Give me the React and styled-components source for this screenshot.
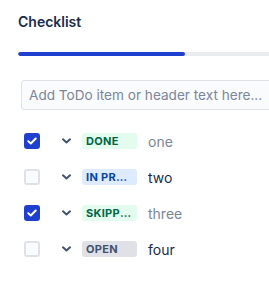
import React from 'react';
import styled, { createGlobalStyle } from 'styled-components';

const GlobalStyle = createGlobalStyle`
  body {
    margin: 0;
    background: #fff;
    font-family: Inter, "Noto Sans", sans-serif;
    color: #172b4d;
    overflow: hidden;
  }
`;

const Panel = styled.div`
  width: 269px;
  height: 298px;
  overflow: hidden;
  padding: 13px 0 0 18px;
  box-sizing: border-box;
`;

const Title = styled.h2`
  margin: 0;
  font-size: 14px;
  font-weight: 600;
  line-height: 17px;
  color: #172b4d;
`;

const Progress = styled.div`
  margin-top: 22px;
  width: 280px;
  height: 4px;
  border-radius: 2px;
  background: #ebecf0;
  overflow: hidden;
`;

const ProgressFill = styled.div`
  height: 100%;
  border-radius: 2px;
  background: #1f3fce;
`;

const AddInput = styled.input`
  display: block;
  margin: 24px 0 0 3px;
  width: 280px;
  height: 30px;
  box-sizing: border-box;
  padding: 0 7px;
  border: 1px solid #dfe1e6;
  border-radius: 3px;
  background: #fafbfc;
  font-family: inherit;
  font-size: 13.6px;
  color: #172b4d;

  &::placeholder {
    color: #7a869a;
  }
`;

const List = styled.ul`
  list-style: none;
  margin: 23px 0 0 0;
  padding: 0 0 0 6px;
  display: flex;
  flex-direction: column;
  gap: 20px;
`;

const Row = styled.li`
  display: flex;
  align-items: center;
  height: 16px;
`;

const Box = styled.span`
  flex: none;
  width: 16px;
  height: 16px;
  box-sizing: border-box;
  border-radius: 3px;
  display: flex;
  align-items: center;
  justify-content: center;
  background: ${p => (p.$checked ? '#1f3fce' : '#fafbfc')};
  border: 2px solid ${p => (p.$checked ? '#1f3fce' : '#dfe1e6')};
`;

const Chevron = styled.span`
  flex: none;
  margin-left: 21px;
  width: 10px;
  display: flex;
  justify-content: center;
`;

const Lozenge = styled.span`
  flex: none;
  margin-left: 11px;
  width: 55px;
  height: 16px;
  box-sizing: border-box;
  padding: 0 5px 0 4px;
  border-radius: 3px;
  font-size: 11px;
  font-weight: 700;
  line-height: 16px;
  letter-spacing: 0.3px;
  text-transform: uppercase;
  white-space: nowrap;
  overflow: hidden;
  text-overflow: ellipsis;
  background: ${p => p.$bg};
  color: ${p => p.$fg};
`;

const Label = styled.span`
  margin-left: 11px;
  font-size: 14px;
  color: ${p => (p.$muted ? '#7a869a' : '#172b4d')};
`;

const statuses = {
  done: { text: 'Done', bg: '#e3fcef', fg: '#006644' },
  progress: { text: 'In progress', bg: '#deebff', fg: '#0747a6' },
  skipped: { text: 'Skipped', bg: '#e3fcef', fg: '#006644' },
  open: { text: 'Open', bg: '#dfe1e6', fg: '#42526e' },
};

const items = [
  { label: 'one', status: 'done', checked: true },
  { label: 'two', status: 'progress', checked: false },
  { label: 'three', status: 'skipped', checked: true },
  { label: 'four', status: 'open', checked: false },
];

const Check = () => (
  <svg width="10" height="8" viewBox="0 0 10 8">
    <path d="M1.3 4.2 L3.8 6.5 L8.7 1.5" fill="none" stroke="#fff" strokeWidth="2" strokeLinecap="round" strokeLinejoin="round" />
  </svg>
);

const ChevronDown = () => (
  <svg width="9" height="6" viewBox="0 0 9 6">
    <path d="M1 1.3 L4.5 4.5 L8 1.3" fill="none" stroke="#42526e" strokeWidth="2" strokeLinecap="round" strokeLinejoin="round" />
  </svg>
);

export default function App() {
  return (
    <Panel>
      <GlobalStyle />
      <Title>Checklist</Title>
      <Progress>
        <ProgressFill style={{ width: `${(2 / 4) * 100 * 1.19}%` }} />
      </Progress>
      <AddInput placeholder="Add ToDo item or header text here..." />
      <List>
        {items.map(item => {
          const s = statuses[item.status];
          return (
            <Row key={item.label}>
              <Box $checked={item.checked}>{item.checked && <Check />}</Box>
              <Chevron><ChevronDown /></Chevron>
              <Lozenge $bg={s.bg} $fg={s.fg}>{s.text}</Lozenge>
              <Label $muted={item.checked}>{item.label}</Label>
            </Row>
          );
        })}
      </List>
    </Panel>
  );
}
